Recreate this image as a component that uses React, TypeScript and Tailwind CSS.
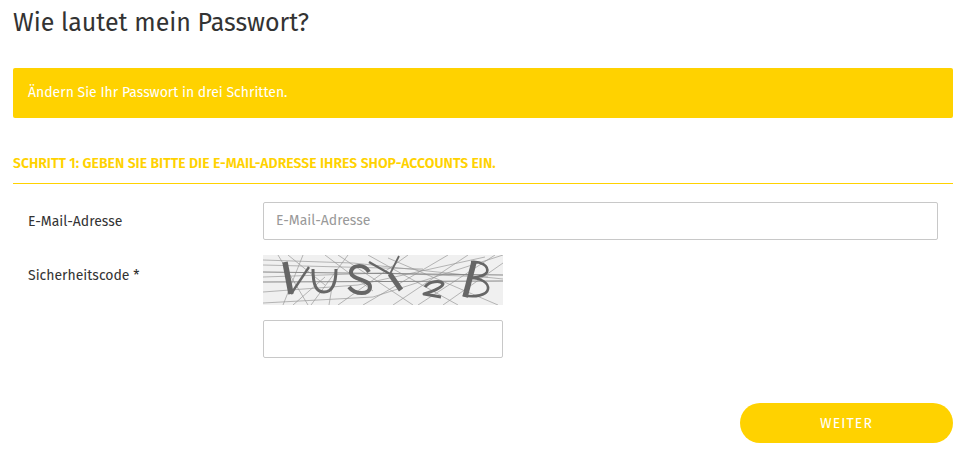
function Captcha() {
  return (
    <svg width="240" height="50" viewBox="0 0 240 50" className="block">
      <rect width="240" height="50" fill="#f0f0f0" />
      <g stroke="#9a9a9a" strokeWidth="0.7" fill="none">
        <path d="M0 5 L90 8 L240 24" />
        <path d="M0 10 L160 14" />
        <path d="M0 22 L120 18 L225 22" />
        <path d="M0 37 L95 30 L222 2" />
        <path d="M0 48 L110 42 L240 0" />
        <path d="M15 0 L45 50" />
        <path d="M25 0 L62 30" />
        <path d="M40 0 L20 50" />
        <path d="M62 0 L110 36" />
        <path d="M75 0 L150 50" />
        <path d="M48 50 L85 0" />
        <path d="M75 50 L145 0" />
        <path d="M100 50 L185 0" />
        <path d="M130 50 L205 0" />
        <path d="M155 50 L232 0" />
        <path d="M180 50 L240 8" />
        <path d="M105 0 L195 50" />
        <path d="M125 3 L235 50" />
        <path d="M66 50 L70 26" />
        <path d="M30 50 L62 22" />
      </g>
      <g stroke="#888" fill="none">
        <path d="M0 17 L240 20" strokeWidth="1.1" />
        <path d="M0 27 L240 26" strokeWidth="1" />
      </g>
      <g stroke="#666" fill="none" strokeLinejoin="round">
        <path d="M22 7 L28 39" strokeWidth="5.5" />
        <path d="M28 39 L46 12" strokeWidth="2.4" />
        <path d="M50 14 C50 30 53 37 61 37 C69 37 73 30 73 14" strokeWidth="3" />
        <path d="M106 17 C101 8 87 10 88 18 C89 25 107 24 107 32 C107 40 92 40 86 32" strokeWidth="4" />
        <path d="M106 7 L127 19" strokeWidth="2.4" />
        <path d="M127 19 L138 35" strokeWidth="5" />
        <path d="M127 19 L136 1" strokeWidth="1.8" />
        <path d="M162 32 C166 26 178 25 180 29 C179 33 170 36 161 39 L178 42" strokeWidth="3" />
        <path d="M211 7 L202 42" strokeWidth="5.5" />
        <path d="M208 7 C218 6 226 11 224 17 C222 21 215 22 208 23 C218 23 226 28 225 34 C224 40 212 43 200 40" strokeWidth="2.6" />
      </g>
    </svg>
  );
}

export default function App() {
  return (
    <div className="h-[459px] bg-white pt-[6px] pl-[13px] pr-[14px] font-['Fira_Sans','Noto_Sans',sans-serif] text-[#333]">
      <h1 className="text-[25px] leading-[34px]">Wie lautet mein Passwort?</h1>

      <div className="mt-[28px] h-[50px] flex items-center rounded-[2px] bg-[#ffd200] px-[15px] pb-[2px] text-[14px] text-white">
        Ändern Sie Ihr Passwort in drei Schritten.
      </div>

      <h2 className="mt-[36px] pb-[9px] border-b border-[#ffd200] text-[14px] leading-[20px] font-semibold text-[#ffd200]">
        SCHRITT 1: GEBEN SIE BITTE DIE E-MAIL-ADRESSE IHRES SHOP-ACCOUNTS EIN.
      </h2>

      <div className="mt-[18px] px-[15px] grid grid-cols-[235px_1fr] items-start text-[14px]">
        <label className="h-[38px] pt-[1px] leading-[37px]">E-Mail-Adresse</label>
        <input
          placeholder="E-Mail-Adresse"
          className="h-[38px] w-full rounded-[2px] border border-[#c8c8c8] px-[12px] pb-[2px] text-[14px] outline-none placeholder:text-[#999]"
        />

        <label className="mt-[15px] leading-[42px]">Sicherheitscode *</label>
        <div className="mt-[15px]">
          <Captcha />
          <input className="mt-[15px] block h-[38px] w-[240px] rounded-[2px] border border-[#c8c8c8] outline-none" />
        </div>
      </div>

      <div className="mt-[45px] flex justify-end">
        <button className="h-[40px] w-[213px] rounded-[20px] bg-[#ffd200] text-[14px] tracking-[1.1px] text-white">
          WEITER
        </button>
      </div>
    </div>
  );
}
